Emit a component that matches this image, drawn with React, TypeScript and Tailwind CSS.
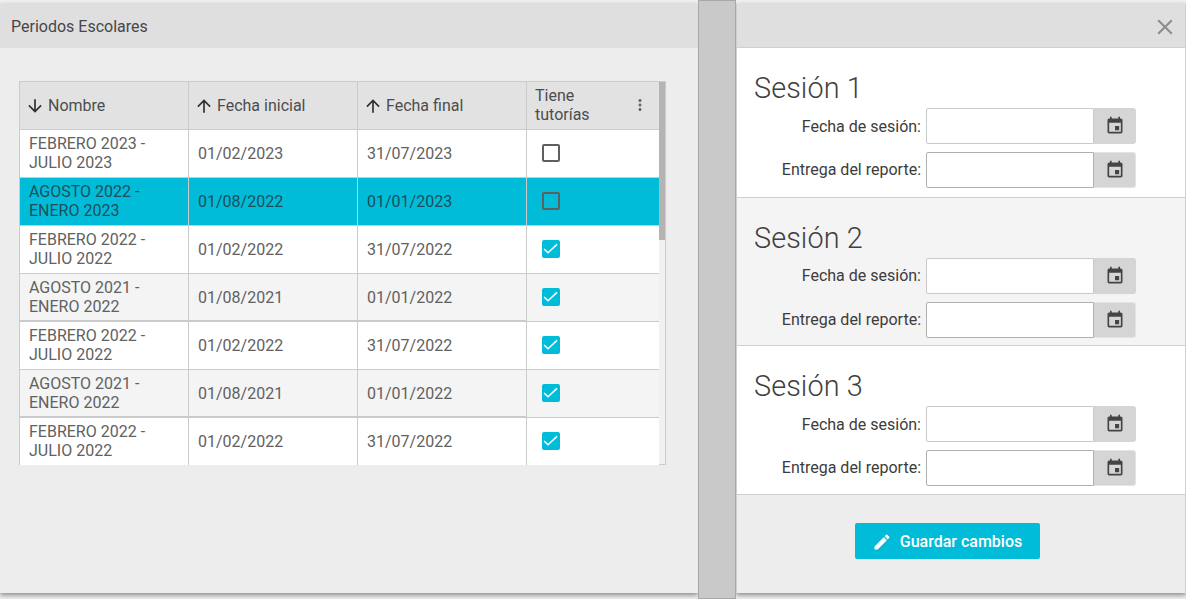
import React from "react";
import { MdArrowDownward, MdArrowUpward, MdMoreVert, MdClose, MdEvent, MdEdit } from "react-icons/md";

type Row = { n: [string, string]; a: string; b: string; c: boolean; sel?: boolean; alt?: boolean; thick?: boolean };
const rows: Row[] = [
  { n: ["FEBRERO 2023 -", "JULIO 2023"], a: "01/02/2023", b: "31/07/2023", c: false },
  { n: ["AGOSTO 2022 -", "ENERO 2023"], a: "01/08/2022", b: "01/01/2023", c: false, sel: true },
  { n: ["FEBRERO 2022 -", "JULIO 2022"], a: "01/02/2022", b: "31/07/2022", c: true },
  { n: ["AGOSTO 2021 -", "ENERO 2022"], a: "01/08/2021", b: "01/01/2022", c: true, alt: true, thick: true },
  { n: ["FEBRERO 2022 -", "JULIO 2022"], a: "01/02/2022", b: "31/07/2022", c: true },
  { n: ["AGOSTO 2021 -", "ENERO 2022"], a: "01/08/2021", b: "01/01/2022", c: true, alt: true, thick: true },
  { n: ["FEBRERO 2022 -", "JULIO 2022"], a: "01/02/2022", b: "31/07/2022", c: true },
];

function HeadCell({ label, down }: { label: string; down?: boolean }) {
  return (
    <div className="flex items-center border-r border-[#cbcbcb] pl-[5px] text-[#4d4d4d]">
      {down ? <MdArrowDownward className="text-[20px] text-[#2f2f2f] mr-[3px]" /> : <MdArrowUpward className="text-[20px] text-[#2f2f2f] mr-[3px]" />}
      <span>{label}</span>
    </div>
  );
}

function TableRow({ r }: { r: Row }) {
  const bg = r.sel ? "bg-[#00bcd8]" : r.alt ? "bg-[#f4f4f4]" : "bg-white";
  const text = r.sel ? "text-[#1c4f5a]" : "text-[#616161]";
  const line = r.thick ? "shadow-[inset_0_-1px_0_#cbcbcb]" : "";
  return (
    <div className={`grid grid-cols-[169px_169px_169px_132px] h-[48px] shrink-0 ${bg} ${text}`}>
      <div className={`flex flex-col justify-center border-r border-b border-[#cbcbcb] ${line} pl-[9px] pb-[1px] leading-[19px]`}>
        <span>{r.n[0]}</span>
        <span>{r.n[1]}</span>
      </div>
      <div className={`flex items-center border-r border-b border-[#cbcbcb] ${line} pl-[9px]`}>{r.a}</div>
      <div className={`flex items-center border-r border-b border-[#cbcbcb] ${line} pl-[9px]`}>{r.b}</div>
      <div className="flex items-center border-b border-[#cbcbcb] pl-[15px] pb-[2px]">
        {r.c ? (
          <span className="flex items-center justify-center w-[18px] h-[18px] rounded-[2px] bg-[#00bcd8] text-white">
            <svg width="18" height="18" viewBox="0 0 18 18" fill="none">
              <path d="M2 9 L6 12.7 L15 4.4" stroke="currentColor" strokeWidth="1.5" />
            </svg>
          </span>
        ) : (
          <span className="w-[18px] h-[18px] rounded-[2px] border-2 border-[#5f5f5f]" />
        )}
      </div>
    </div>
  );
}

function DateField({ label, dark, low }: { label: string; dark?: boolean; low?: boolean }) {
  return (
    <div className="flex items-center h-[36px]">
      <span className={`w-[172px] text-right text-[#3c3c3c] text-[16px] pr-[5px] shrink-0 ${low ? "pt-[2px]" : ""}`}>{label}</span>
      <div className={`w-[168px] h-[36px] bg-white border rounded-l-[2px] ${dark ? "border-[#b0b0b0]" : "border-[#c9c9c9]"}`} />
      <div className={`w-[42px] h-[36px] bg-[#d5d5d5] rounded-r-[3px] flex items-center justify-center text-[#444] ${dark ? "border border-l-0 border-[#e4e4e4]" : ""}`}>
        <MdEvent className="text-[20px]" />
      </div>
    </div>
  );
}

function Session({ n, h, bg, low }: { n: number; h: string; bg: string; low?: boolean }) {
  return (
    <section className={`${h} ${bg} border-b border-[#cfcfcf] pl-[17px] pt-[21px] shrink-0`}>
      <h2 className="text-[28.8px] leading-[38px] h-[39px] text-[#3f3f3f] font-light tracking-[0.1px]">Sesión {n}</h2>
      <div className="flex flex-col gap-[8px]">
        <DateField label="Fecha de sesión:" low={low} />
        <DateField label="Entrega del reporte:" dark />
      </div>
    </section>
  );
}

export default function App() {
  return (
    <div className="w-[1186px] h-[599px] overflow-hidden flex bg-[#f0f0f0] text-[16px] font-['Roboto',sans-serif]">
      <div className="w-[698px] shrink-0 pt-[4px] pb-[6px]">
        <div className="h-full bg-[#ededed] shadow-[0_2px_5px_rgba(0,0,0,0.45)] flex flex-col">
          <div className="h-[44px] shrink-0 bg-[#dfdfdf] flex items-center pl-[11px] pt-[2px] text-[#474747]">Periodos Escolares</div>
          <div className="pt-[33px] pl-[19px]">
            <div className="w-[647px] h-[384px] flex border-t border-l border-r border-[#cbcbcb] overflow-hidden">
              <div className="w-[639px] shrink-0 flex flex-col">
                <div className="grid grid-cols-[169px_169px_169px_132px] h-[48px] shrink-0 bg-[#e2e2e2] border-b border-[#cbcbcb]">
                  <HeadCell label="Nombre" down />
                  <HeadCell label="Fecha inicial" />
                  <HeadCell label="Fecha final" />
                  <div className="flex items-center justify-between pl-[8px] pr-[10px] pb-[2px] text-[#4d4d4d] leading-[19px]">
                    <span>Tiene<br />tutorías</span>
                    <MdMoreVert className="text-[18px] text-[#666]" />
                  </div>
                </div>
                {rows.map((r, i) => <TableRow key={i} r={r} />)}
              </div>
              <div className="w-[6px] shrink-0 bg-[#f1f1f1] border-b border-[#cbcbcb] relative">
                <div className="absolute left-0 top-0 w-[6px] h-[158px] bg-[#b4b4b4]" />
              </div>
            </div>
          </div>
        </div>
      </div>
      <div className="w-[38px] shrink-0 h-[599px] relative z-10 bg-[#c9c9c9] border border-[#a8a8a8]" />
      <div className="w-[450px] shrink-0 pt-[4px] pb-[6px]">
        <div className="h-full bg-[#ededed] shadow-[0_2px_5px_rgba(0,0,0,0.45)] flex flex-col border-l border-r border-[#cfcfcf]">
          <div className="h-[44px] shrink-0 bg-[#dfdfdf] border-b border-[#cfcfcf] flex items-center justify-end pr-[7px] pt-[2px] text-[#8d8d8d]">
            <MdClose className="text-[26px]" />
          </div>
          <Session n={1} h="h-[150px]" bg="bg-white" low />
          <Session n={2} h="h-[148px]" bg="bg-[#f4f4f4]" />
          <Session n={3} h="h-[149px]" bg="bg-white" low />
          <div className="flex-1 flex justify-center pt-[28px] pr-[28px]">
            <button className="w-[185px] h-[36px] pt-[1px] rounded-[2px] bg-[#00bcd8] text-white font-medium text-[16px] flex items-center justify-center gap-[8px]">
              <MdEdit className="text-[20px]" />
              Guardar cambios
            </button>
          </div>
        </div>
      </div>
    </div>
  );
}
